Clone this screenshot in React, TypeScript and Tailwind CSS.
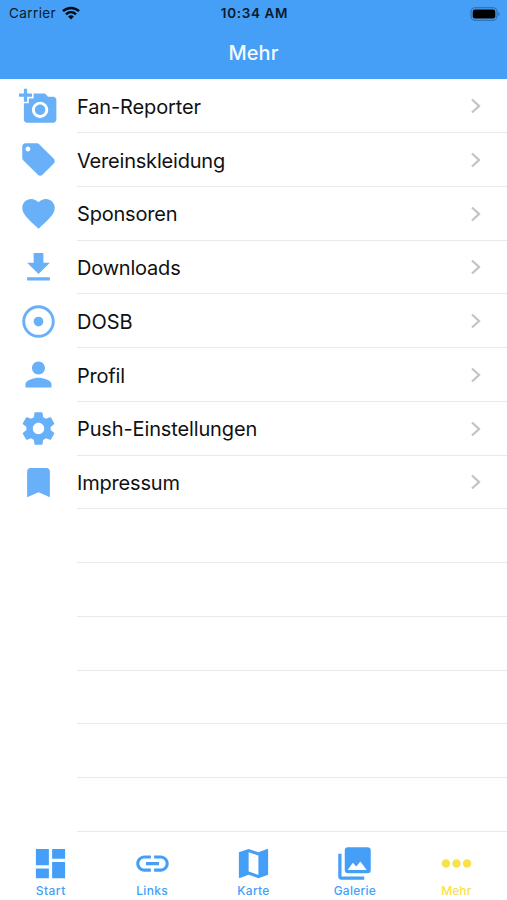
import React from "react";

type IconProps = { d: string; className?: string };

function Glyph({ d, className = "" }: IconProps) {
  return (
    <svg viewBox="0 0 24 24" fill="currentColor" fillRule="evenodd" className={className}>
      <path d={d} />
    </svg>
  );
}

const rows = [
  { label: "Fan-Reporter", track: "tracking-[-0.13px]", d: "M3 4V1h2v3h3v2H5v3H3V6H0V4h3zm3 6V7h3V4h7l1.83 2H21c1.1 0 2 .9 2 2v12c0 1.1-.9 2-2 2H5c-1.1 0-2-.9-2-2V10h3zm7 9c2.76 0 5-2.24 5-5s-2.24-5-5-5-5 2.24-5 5 2.24 5 5 5zm-3.2-5c0 1.77 1.43 3.2 3.2 3.2s3.2-1.43 3.2-3.2-1.43-3.2-3.2-3.2-3.2 1.43-3.2 3.2z" },
  { label: "Vereinskleidung", track: "tracking-[-0.2px]", d: "M21.41 11.58l-9-9C12.05 2.22 11.55 2 11 2H4c-1.1 0-2 .9-2 2v7c0 .55.22 1.05.59 1.42l9 9c.36.36.86.58 1.41.58.55 0 1.05-.22 1.41-.59l7-7c.37-.36.59-.86.59-1.41 0-.55-.23-1.06-.59-1.42zM5.500 7C4.670 7 4 6.330 4 5.500S4.670 4 5.500 4 7 4.670 7 5.500 6.330 7 5.500 7z" },
  { label: "Sponsoren", track: "tracking-[-0.2px]", d: "M12 21.35l-1.45-1.32C5.4 15.36 2 12.28 2 8.5 2 5.42 4.42 3 7.5 3c1.74 0 3.41.81 4.5 2.09C13.09 3.81 14.76 3 16.5 3 19.58 3 22 5.42 22 8.5c0 3.780-3.400 6.860-8.550 11.540L12 21.350z" },
  { label: "Downloads", track: "tracking-[-0.2px]", d: "M19 9h-4V3H9v6H5l7 7 7-7zM5 18v2h14v-2H5z" },
  { label: "DOSB", track: "tracking-[-0.05px]", d: "M12 2C6.480 2 2 6.480 2 12s4.480 10 10 10 10-4.480 10-10S17.520 2 12 2zm0 18.200a8.200 8.200 0 1 1 0-16.400 8.200 8.200 0 0 1 0 16.400zM12 9a3 3 0 1 0 0 6 3 3 0 0 0 0-6z" },
  { label: "Profil", track: "tracking-[-0.2px]", d: "M12 12c2.210 0 4-1.790 4-4s-1.790-4-4-4-4 1.790-4 4 1.790 4 4 4zm0 2c-2.670 0-8 1.340-8 4v2h16v-2c0-2.660-5.330-4-8-4z" },
  { label: "Push-Einstellungen", track: "tracking-[-0.13px]", d: "M19.43 12.98c.04-.32.07-.64.07-.98s-.03-.66-.07-.98l2.11-1.65c.19-.15.24-.42.12-.64l-2-3.46c-.12-.22-.39-.3-.61-.22l-2.49 1c-.52-.4-1.08-.73-1.69-.98l-.38-2.65C14.46 2.18 14.25 2 14 2h-4c-.25 0-.46.18-.49.42l-.38 2.65c-.61.25-1.17.59-1.69.98l-2.49-1c-.23-.09-.49 0-.61.22l-2 3.46c-.13.22-.07.49.12.64l2.11 1.65c-.04.32-.07.65-.07.98s.03.66.07.98l-2.11 1.65c-.19.15-.24.42-.12.64l2 3.46c.12.22.39.3.61.22l2.49-1c.52.4 1.080.73 1.690.98l.38 2.65c.03.24.24.42.49.42h4c.25 0 .46-.18.49-.42l.38-2.650c.61-.25 1.170-.59 1.690-.98l2.490 1c.23.09.49 0 .61-.22l2-3.460c.12-.22.07-.49-.12-.64l-2.110-1.650zM12 15.500c-1.930 0-3.500-1.570-3.500-3.500s1.570-3.500 3.500-3.500 3.500 1.570 3.500 3.500-1.570 3.500-3.500 3.500z" },
  { label: "Impressum", track: "tracking-[-0.18px]", d: "M17 3H7c-1.100 0-1.990.9-1.990 2L5 21l7-3 7 3V5c0-1.100-.9-2-2-2z" },
];

const blanks = [0, 1, 2, 3, 4, 5];

const tabs = [
  { label: "Start", track: "tracking-[0.5px]", d: "M3 13h8V3H3v10zm0 8h8v-6H3v6zm10 0h8V11h-8v10zm0-18v6h8V3h-8z" },
  { label: "Links", track: "tracking-[0.3px]", d: "M3.900 12c0-1.710 1.390-3.100 3.100-3.100h4V7H7c-2.760 0-5 2.240-5 5s2.240 5 5 5h4v-1.900H7c-1.710 0-3.100-1.390-3.100-3.100zM8 13h8v-2H8v2zm9-6h-4v1.900h4c1.710 0 3.100 1.390 3.100 3.100s-1.390 3.100-3.100 3.100h-4V17h4c2.760 0 5-2.240 5-5s-2.240-5-5-5z" },
  { label: "Karte", track: "tracking-[0.3px]", d: "M20.500 3l-.16.03L15 5.100 9 3 3.360 4.900c-.21.07-.36.25-.36.48V20.500c0 .28.22.5.5.5l.16-.03L9 18.900l6 2.100 5.640-1.900c.21-.07.36-.25.36-.48V3.500c0-.28-.22-.5-.5-.5zM15 19l-6-2.110V5l6 2.110V19z" },
  { label: "Galerie", track: "tracking-[0.25px]", d: "M20 2H8a2 2 0 0 0-2 2v12a2 2 0 0 0 2 2h12a2 2 0 0 0 2-2V4a2 2 0 0 0-2-2zM7.800 16l3.200-4.400 2.100 2.300 2.500-3.100L19.500 16zM2 6v14a2 2 0 0 0 2 2h14v-2H4V6z" },
  { label: "Mehr", track: "tracking-[0.1px]", d: "M5.500 9.400a2.600 2.600 0 1 0 0 5.200 2.600 2.600 0 0 0 0-5.200zm6.500 0a2.600 2.600 0 1 0 0 5.200 2.600 2.600 0 0 0 0-5.200zm6.500 0a2.600 2.600 0 1 0 0 5.200 2.600 2.600 0 0 0 0-5.200z" },
];

export default function App() {
  return (
    <div className="flex h-[900px] w-[507px] flex-col overflow-hidden bg-white font-['Inter',sans-serif]">
      <header className="flex h-[79px] shrink-0 flex-col bg-[#459ff7]">
        <div className="grid h-[27px] grid-cols-3 items-center pl-[9px] pr-[7px] text-[13.5px] text-[#0b1a29]">
          <div className="flex items-center gap-[6px]">
            <span className="tracking-[0.4px]">Carrier</span>
            <svg viewBox="0 0 18 14" className="mb-[2px] h-[14px] w-[18px]" fill="none" stroke="#050b12" strokeWidth="2.500">
              <path d="M1 5.200C5.500.9 12.500.9 17 5.200M4 8.300c2.900-2.700 7.100-2.700 10 0" />
              <path d="M9 13.500l-2.900-3.100c1.700-1.400 4.100-1.400 5.800 0z" fill="#050b12" stroke="none" />
            </svg>
          </div>
          <span className="text-center font-semibold tracking-[0.65px]">10:34 AM</span>
          <svg viewBox="0 0 30 14" className="h-[14px] w-[30px] justify-self-end">
            <rect x="1" y="0.700" width="26" height="12.600" rx="4" fill="none" stroke="#2d6aa7" strokeWidth="1.100" />
            <rect x="2.700" y="2.400" width="22.600" height="9.200" rx="2.300" fill="#000" />
            <path d="M28.300 5v4c1.700-.6 1.700-3.400 0-4z" fill="#2d6aa7" />
          </svg>
        </div>
        <h1 className="flex h-[52px] items-center justify-center pb-px text-[20px] font-medium text-[#f4faff]">Mehr</h1>
      </header>
      <main className="flex h-[753.500px] shrink-0 flex-col pt-[0.3px]">
        {rows.map((r) => (
          <div key={r.label} className="flex h-[53.75px] shrink-0">
            <div className="flex w-[77px] items-center pl-[19.3px]">
              <Glyph d={r.d} className="size-[39px] text-[#68b0f8]" />
            </div>
            <div className="flex flex-1 items-center justify-between border-b border-[#e9e9ea] pr-[25px]">
              <span className={"whitespace-nowrap pt-[2.5px] text-[20px] text-[#111] " + r.track}>{r.label}</span>
              <svg viewBox="0 0 12 18" className="mt-px h-[18px] w-3" fill="none" stroke="#c4c4c7" strokeWidth="2.300">
                <path d="M2 2.500L9 9l-7 6.500" />
              </svg>
            </div>
          </div>
        ))}
        {blanks.map((b) => (
          <div key={b} className="ml-[77px] h-[53.75px] shrink-0 border-b border-[#e9e9ea]" />
        ))}
      </main>
      <nav className="grid flex-1 grid-cols-5">
        {tabs.map((t) => (
          <div
            key={t.label}
            className={"flex flex-col items-center pt-[11.5px] " + (t.label === "Mehr" ? "text-[#f9e14c]" : "text-[#459ff7]")}
          >
            <Glyph d={t.d} className="size-[39px]" />
            <span className={"mt-[1px] text-[12px] font-medium leading-[14px] " + t.track}>{t.label}</span>
          </div>
        ))}
      </nav>
    </div>
  );
}
